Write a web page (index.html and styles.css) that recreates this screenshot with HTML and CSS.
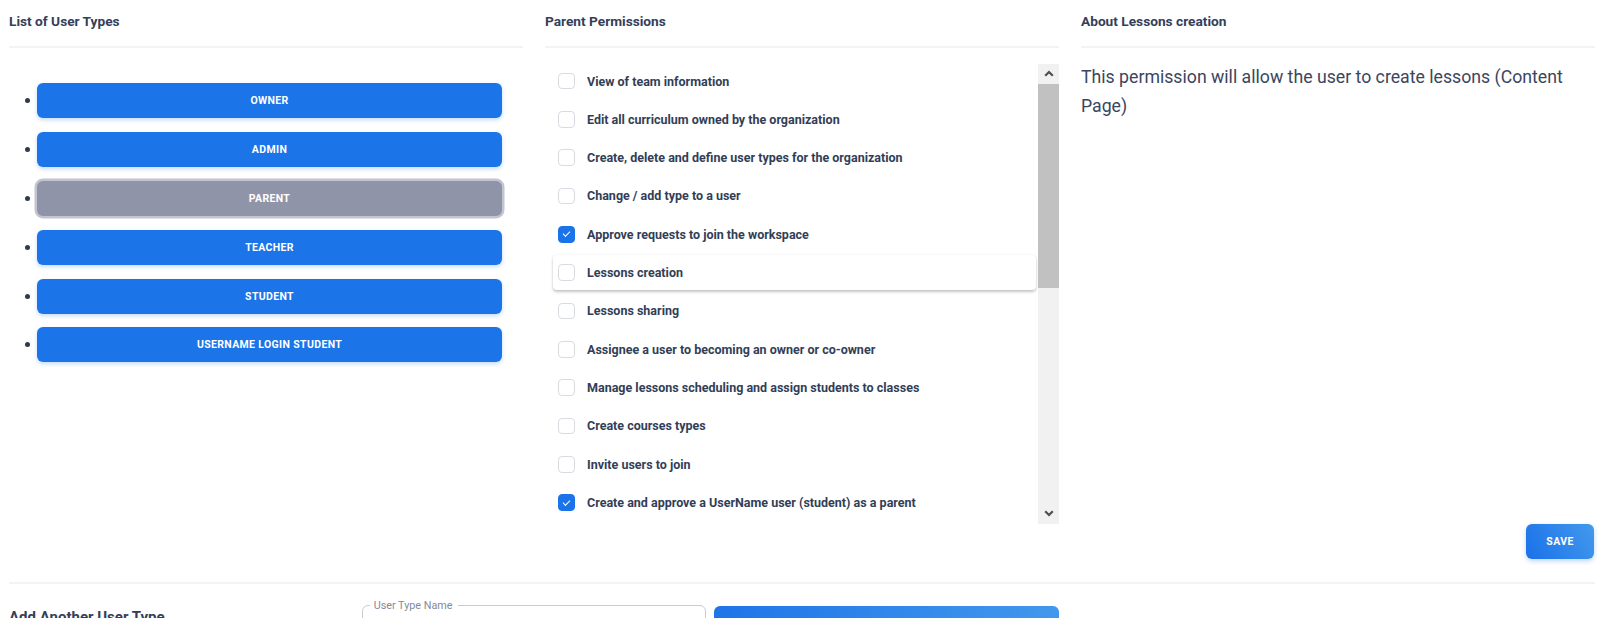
FILE: index.html
```html
<!DOCTYPE html>
<html lang="en">
<head>
<meta charset="utf-8">
<title>User Types and Permissions</title>
<link rel="stylesheet" href="styles.css">
</head>
<body>
<main class="page">
  <div class="columns">
    <section class="col">
      <h2 class="col-title">List of User Types</h2>
      <ul class="type-list">
        <li class="type-item"><button class="type-btn">Owner</button></li>
        <li class="type-item"><button class="type-btn">Admin</button></li>
        <li class="type-item"><button class="type-btn is-active">Parent</button></li>
        <li class="type-item"><button class="type-btn">Teacher</button></li>
        <li class="type-item"><button class="type-btn">Student</button></li>
        <li class="type-item"><button class="type-btn">Username Login Student</button></li>
      </ul>
    </section>

    <section class="col">
      <h2 class="col-title">Parent Permissions</h2>
      <div class="perm-panel">
        <div class="perm-scroll">
          <ul class="perm-list">
            <li><label class="perm"><input type="checkbox" class="check"><span>View of team information</span></label></li>
            <li><label class="perm"><input type="checkbox" class="check"><span>Edit all curriculum owned by the organization</span></label></li>
            <li><label class="perm"><input type="checkbox" class="check"><span>Create, delete and define user types for the organization</span></label></li>
            <li><label class="perm"><input type="checkbox" class="check"><span>Change / add type to a user</span></label></li>
            <li><label class="perm"><input type="checkbox" class="check" checked><span>Approve requests to join the workspace</span></label></li>
            <li><label class="perm is-hover"><input type="checkbox" class="check"><span>Lessons creation</span></label></li>
            <li><label class="perm"><input type="checkbox" class="check"><span>Lessons sharing</span></label></li>
            <li><label class="perm"><input type="checkbox" class="check"><span>Assignee a user to becoming an owner or co-owner</span></label></li>
            <li><label class="perm"><input type="checkbox" class="check"><span>Manage lessons scheduling and assign students to classes</span></label></li>
            <li><label class="perm"><input type="checkbox" class="check"><span>Create courses types</span></label></li>
            <li><label class="perm"><input type="checkbox" class="check"><span>Invite users to join</span></label></li>
            <li><label class="perm"><input type="checkbox" class="check" checked><span>Create and approve a UserName user (student) as a parent</span></label></li>
          </ul>
        </div>
        <div class="scrollbar" aria-hidden="true">
          <span class="sb-btn">
            <svg width="10" height="7" viewBox="0 0 10 7"><path d="M1.2 5.8 L5 2 L8.8 5.8" fill="none" stroke="#4f4f4f" stroke-width="2.2"/></svg>
          </span>
          <span class="sb-track"><span class="sb-thumb"></span></span>
          <span class="sb-btn">
            <svg width="10" height="7" viewBox="0 0 10 7"><path d="M1.2 1.2 L5 5 L8.8 1.2" fill="none" stroke="#4f4f4f" stroke-width="2.2"/></svg>
          </span>
        </div>
      </div>
    </section>

    <section class="col">
      <h2 class="col-title">About Lessons creation</h2>
      <p class="about-text">This permission will allow the user to create lessons (Content Page)</p>
    </section>
  </div>

  <div class="actions">
    <button class="btn-primary save-btn">Save</button>
  </div>

  <hr class="separator">

  <div class="add-row">
    <h3 class="add-title">Add Another User Type</h3>
    <fieldset class="field">
      <legend>User Type Name</legend>
      <input type="text" class="field-input">
    </fieldset>
    <button class="btn-primary add-btn" aria-label="Add user type"></button>
  </div>
</main>
</body>
</html>
```

FILE: styles.css
```css
* { box-sizing: border-box; }

html { overflow: hidden; }

body {
  margin: 0;
  background: #ffffff;
  color: #333f58;
  font-family: Roboto, "Liberation Sans", Arial, sans-serif;
}

.page {
  padding: 0 10px 0 9px;
}

.columns {
  display: grid;
  grid-template-columns: repeat(3, minmax(0, 1fr));
  column-gap: 22px;
}

.col-title {
  margin: 0;
  padding: 11px 0 15px;
  font-size: 13.7px;
  line-height: 20px;
  font-weight: 700;
  color: #344059;
  border-bottom: 2px solid #f3f3f5;
}

/* ---- user types ---- */
.type-list {
  list-style: none;
  margin: 35px 0 0;
  padding: 0 21px 0 16px;
  display: flex;
  flex-direction: column;
  gap: 13.9px;
}

.type-item {
  display: flex;
  align-items: center;
  gap: 7px;
}

.type-item::before {
  content: "";
  width: 5px;
  height: 5px;
  border-radius: 50%;
  background: #2f3a52;
  flex: none;
}

.type-btn {
  flex: 1;
  height: 35px;
  border: none;
  border-radius: 6px;
  background: #1b74e8;
  color: #ffffff;
  font-family: inherit;
  font-size: 10.5px;
  font-weight: 700;
  letter-spacing: 0.35px;
  text-transform: uppercase;
  box-shadow: 0 2px 4px rgba(27, 116, 232, 0.25);
  cursor: pointer;
}

.type-btn.is-active {
  background: #9094a8;
  box-shadow: 0 0 0 2.5px #c2c4cf;
}

/* ---- permissions ---- */
.perm-panel {
  display: flex;
  margin-top: 15.5px;
  height: 460.5px;
}

.perm-scroll {
  flex: 1;
  min-width: 0;
  overflow: hidden;
}

.perm-list {
  list-style: none;
  margin: 0;
  padding: 0 2px 0 8px;
}

.perm {
  display: flex;
  align-items: center;
  gap: 12.5px;
  height: 35px;
  margin-bottom: 3.33px;
  padding-left: 5px;
  border-radius: 4px;
  font-size: 12.5px;
  font-weight: 700;
  color: #323e57;
  cursor: pointer;
}

.perm.is-hover {
  background: #ffffff;
  box-shadow: 0 2px 3px rgba(0, 0, 0, 0.22), 0 0 2px rgba(0, 0, 0, 0.08);
}

.check {
  appearance: none;
  -webkit-appearance: none;
  position: relative;
  flex: none;
  width: 16.5px;
  height: 16.5px;
  margin: 0;
  border: 1px solid #d9dbe2;
  border-radius: 4px;
  background: #ffffff;
  cursor: pointer;
}

.check:checked {
  background: #1a73e8;
  border-color: #1a73e8;
}

.check:checked::after {
  content: "";
  position: absolute;
  left: 4.2px;
  top: 4.2px;
  width: 6px;
  height: 3px;
  border-left: 1.8px solid #ffffff;
  border-bottom: 1.8px solid #ffffff;
  transform: rotate(-45deg);
}

.scrollbar {
  flex: none;
  width: 21px;
  display: flex;
  flex-direction: column;
  background: #f1f1f1;
}

.sb-btn {
  height: 20.5px;
  display: flex;
  align-items: center;
  justify-content: center;
}

.sb-track {
  flex: 1;
}

.sb-thumb {
  display: block;
  height: 204px;
  background: #c1c1c1;
}

/* ---- about ---- */
.about-text {
  margin: 15px 0 0;
  font-size: 17.7px;
  line-height: 28.5px;
  font-weight: 400;
  color: #3a4660;
}

/* ---- actions ---- */
.actions {
  display: flex;
  justify-content: flex-end;
}

.btn-primary {
  border: none;
  border-radius: 6px;
  background: linear-gradient(60deg, #1a71e8 0%, #4399ec 100%);
  color: #ffffff;
  font-family: inherit;
  font-size: 10.5px;
  font-weight: 700;
  letter-spacing: 0.35px;
  text-transform: uppercase;
  cursor: pointer;
}

.save-btn {
  width: 68px;
  height: 35px;
  margin-right: 1px;
  box-shadow: 0 2px 5px rgba(27, 116, 232, 0.3);
}

.separator {
  margin: 23px 0 0;
  height: 2px;
  border: none;
  background: #f3f3f5;
}

/* ---- add row ---- */
.add-row {
  display: grid;
  grid-template-columns: repeat(3, minmax(0, 1fr));
  column-gap: 8px;
  align-items: start;
  width: calc((100% - 44px) * 2 / 3 + 22px);
  margin-top: 15px;
}

.add-title {
  margin: 8px 0 0;
  font-size: 15px;
  line-height: 20px;
  font-weight: 700;
  color: #344059;
}

.field {
  margin: 0;
  padding: 0 12px 6px;
  border: 1px solid #c9cbd4;
  border-radius: 6px;
  min-width: 0;
}

.field legend {
  margin-left: -5px;
  padding: 0 5px 0 4px;
  font-size: 10.8px;
  line-height: 13px;
  color: #858a9c;
}

.field-input {
  width: 100%;
  height: 34px;
  border: none;
  outline: none;
  font-family: inherit;
  font-size: 14px;
  color: #333f58;
  background: transparent;
}

.add-btn {
  margin-top: 7px;
  height: 42px;
  background: linear-gradient(90deg, #1f75e8 0%, #4298ec 100%);
}
```
